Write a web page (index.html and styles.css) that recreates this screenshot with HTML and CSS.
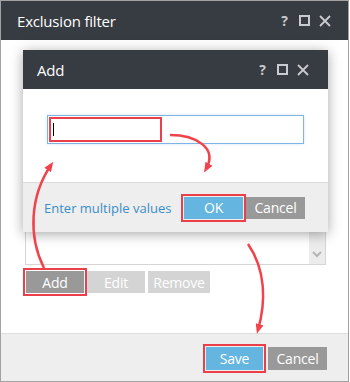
FILE: index.html
```html
<!DOCTYPE html>
<html>
<head>
    <title>Exclusion filter</title>
    <link rel="stylesheet" href="styles.css">
</head>
<body>
    <div class="window">
        <div class="title-bar">
            <span class="title">Exclusion filter</span>
            <div class="title-icons">
                <span class="help">?</span>
                <svg width="11" height="11" viewBox="0 0 11 11"><rect x="1" y="1" width="9" height="9" fill="none" stroke="#c9cbce" stroke-width="2"/></svg>
                <svg width="12" height="12" viewBox="0 0 12 12"><path d="M1 1 L11 11 M11 1 L1 11" stroke="#c9cbce" stroke-width="1.8"/></svg>
            </div>
        </div>

        <div class="content">
            <div class="list-box">
                <div class="scroll">
                    <svg width="10" height="7" viewBox="0 0 10 7"><path d="M1 1 L5 5 L9 1" fill="none" stroke="#b5b5b5" stroke-width="2"/></svg>
                </div>
            </div>
            <div class="list-buttons">
                <button class="btn btn-dark marked">Add</button>
                <button class="btn btn-light">Edit</button>
                <button class="btn btn-light">Remove</button>
            </div>
        </div>

        <div class="footer">
            <button class="btn btn-blue marked">Save</button>
            <button class="btn btn-dark">Cancel</button>
        </div>

        <!-- add dialog on top of the filter window -->
        <div class="dialog">
            <div class="title-bar small">
                <span class="title">Add</span>
                <div class="title-icons">
                    <span class="help">?</span>
                    <svg width="11" height="11" viewBox="0 0 11 11"><rect x="1" y="1" width="9" height="9" fill="none" stroke="#c9cbce" stroke-width="2"/></svg>
                    <svg width="12" height="12" viewBox="0 0 12 12"><path d="M1 1 L11 11 M11 1 L1 11" stroke="#c9cbce" stroke-width="1.8"/></svg>
                </div>
            </div>
            <div class="dialog-body">
                <div class="input">
                    <span class="caret"></span>
                    <span class="input-mark"></span>
                </div>
            </div>
            <div class="dialog-footer">
                <a class="link">Enter multiple values</a>
                <div class="dialog-buttons">
                    <button class="btn btn-blue marked">OK</button>
                    <button class="btn btn-dark">Cancel</button>
                </div>
            </div>
        </div>

        <svg class="arrows" width="350" height="382" viewBox="0 0 350 382">
            <defs>
                <marker id="head" markerWidth="10" markerHeight="8" refX="6" refY="4" orient="auto" markerUnits="userSpaceOnUse">
                    <path d="M0 0 L10 4 L0 8 Z" fill="#f0434b"/>
                </marker>
            </defs>
            <path d="M44 268 C28 236 30 196 51 165" fill="none" stroke="#f0434b" stroke-width="2.5" marker-end="url(#head)"/>
            <path d="M170 135 C196 135 218 148 206 169" fill="none" stroke="#f0434b" stroke-width="2.5" marker-end="url(#head)"/>
            <path d="M248 244 C266 270 266 302 258 330" fill="none" stroke="#f0434b" stroke-width="2.5" marker-end="url(#head)"/>
        </svg>
    </div>
</body>
</html>
```

FILE: styles.css
```css
body { margin: 0; font-family: "Open Sans", "Noto Sans", sans-serif; }
.window {
    position: relative;
    width: 349px;
    height: 382px;
    box-sizing: border-box;
    border: 1px solid #a2a2a2;
    display: flex;
    flex-direction: column;
    background: #fff;
    overflow: hidden;
}
.title-bar {
    background: #373b42;
    height: 39px;
    display: flex;
    align-items: center;
    justify-content: space-between;
    padding: 0 17px 0 16px;
    flex-shrink: 0;
}
.title { color: #fff; font-size: 15px; letter-spacing: -0.2px; }
.title-icons { display: flex; align-items: center; gap: 9px; }
.title-icons svg { display: block; }
.help { color: #c9cbce; font-weight: bold; font-size: 14px; margin-right: 2px; }

.content { flex: 1; padding: 20px 22px 0 24px; }
.list-box {
    height: 203px;
    border: 1px solid #d5d5d5;
    display: flex;
    justify-content: flex-end;
}
.scroll {
    width: 16px;
    background: #ececec;
    display: flex;
    align-items: flex-end;
    justify-content: center;
    padding-bottom: 6px;
}
.list-buttons { display: flex; gap: 3px; margin-top: 6px; margin-left: 1px; }

.btn {
    border: none;
    height: 22px;
    width: 58px;
    color: #fff;
    font-family: "Open Sans", "Noto Sans", sans-serif;
    font-size: 14px;
    letter-spacing: -0.2px;
    padding: 0;
}
.btn-dark { background: #999; }
.btn-light { background: #d4d4d4; }
.btn-blue { background: #64b5e0; }
.list-buttons .btn-light:last-child { width: 62px; }
.marked { outline: 2px solid #eb4049; outline-offset: 1px; }

.footer {
    height: 48px;
    border-top: 1px solid #dedede;
    background: #eeeeee;
    display: flex;
    justify-content: flex-end;
    align-items: flex-start;
    gap: 5px;
    padding: 13px 21px 0 0;
    box-sizing: border-box;
    flex-shrink: 0;
}
.footer .btn { height: 23px; width: 57px; }
.footer .btn-dark { width: 59px; }

.dialog {
    position: absolute;
    left: 22px;
    top: 49px;
    width: 305px;
    background: #fff;
    box-shadow: 0 2px 12px rgba(0, 0, 0, 0.35);
}
.title-bar.small { padding: 0 19px 0 14px; }
.title-bar.small .title { font-size: 15px; }
.dialog-body { height: 93px; padding: 26px 0 0 24px; box-sizing: border-box; }
.input {
    position: relative;
    width: 257px;
    height: 29px;
    box-sizing: border-box;
    border: 1px solid #7fb4e4;
    box-shadow: 0 0 3px rgba(120, 170, 220, 0.3);
}
.caret { position: absolute; left: 5px; top: 7px; width: 1px; height: 13px; background: #000; }
.input-mark {
    position: absolute;
    left: 1px;
    top: 1px;
    width: 113px;
    height: 25px;
    box-sizing: border-box;
    border: 2px solid #eb4049;
}
.dialog-footer {
    height: 50px;
    background: #eeeeee;
    border-top: 1px solid #dcdcdc;
    box-sizing: border-box;
    display: flex;
    align-items: center;
    justify-content: space-between;
    padding: 0 23px 0 21px;
}
.link { color: #3a8dc7; font-size: 13px; }
.dialog-buttons { display: flex; gap: 3px; }
.dialog-buttons .btn { width: 59px; }

.arrows { position: absolute; left: -1px; top: -1px; pointer-events: none; }
```
